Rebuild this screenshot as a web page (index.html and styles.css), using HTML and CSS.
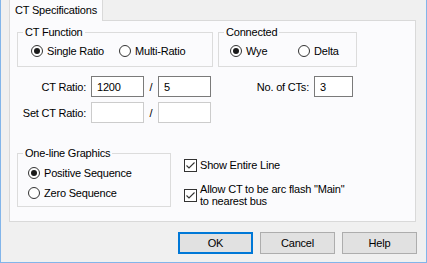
FILE: index.html
```html
<!DOCTYPE html>
<html lang="en">
<head>
    <meta charset="UTF-8">
    <title>CT Specifications</title>
    <link rel="stylesheet" href="styles.css">
</head>
<body>
    <div class="dialog">
        <div class="tab">CT Specifications</div>
        <div class="page">
            <div class="top-row">
                <div class="group group-function">
                    <div class="group-title">CT Function</div>
                    <div class="options options-function">
                        <div class="radio checked w-single"><span class="circle"></span>Single Ratio</div>
                        <div class="radio"><span class="circle"></span>Multi-Ratio</div>
                    </div>
                </div>
                <div class="group group-connected">
                    <div class="group-title">Connected</div>
                    <div class="options options-connected">
                        <div class="radio checked w-wye"><span class="circle"></span>Wye</div>
                        <div class="radio"><span class="circle"></span>Delta</div>
                    </div>
                </div>
            </div>

            <div class="ratio-grid">
                <span class="label">CT Ratio:</span>
                <input type="text" value="1200">
                <span class="slash">/</span>
                <input type="text" value="5">
                <span class="label">No. of CTs:</span>
                <input type="text" value="3">

                <span class="label">Set CT Ratio:</span>
                <input type="text" disabled>
                <span class="slash">/</span>
                <input type="text" disabled>
            </div>

            <div class="bottom-row">
                <div class="group group-graphics">
                    <div class="group-title">One-line Graphics</div>
                    <div class="options options-graphics">
                        <div class="radio checked"><span class="circle"></span>Positive Sequence</div>
                        <div class="radio"><span class="circle"></span>Zero Sequence</div>
                    </div>
                </div>
                <div class="checks">
                    <div class="check">
                        <span class="box"><svg width="11" height="11" viewBox="0 0 11 11"><polyline points="1.5,5.5 4,8 9.5,2.5" fill="none" stroke="#333" stroke-width="1.1"/></svg></span>
                        <span>Show Entire Line</span>
                    </div>
                    <div class="check check-two">
                        <span class="box"><svg width="11" height="11" viewBox="0 0 11 11"><polyline points="1.5,5.5 4,8 9.5,2.5" fill="none" stroke="#333" stroke-width="1.1"/></svg></span>
                        <span>Allow CT to be arc flash "Main"<br>to nearest bus</span>
                    </div>
                </div>
            </div>
        </div>

        <div class="buttons">
            <button class="default">OK</button>
            <button>Cancel</button>
            <button>Help</button>
        </div>
    </div>
</body>
</html>
```
FILE: styles.css
```css
* {
    margin: 0;
    padding: 0;
    box-sizing: border-box;
}

body {
    width: 427px;
    height: 263px;
    background: #f0f0f0;
    font-family: "Liberation Sans", Arial, sans-serif;
    font-size: 11px;
    letter-spacing: -0.2px;
    color: #000;
}

.dialog {
    width: 427px;
    height: 263px;
    border-left: 1px solid #82b5ea;
    border-right: 1px solid #82b5ea;
    border-bottom: 1px solid #82b5ea;
    padding-left: 8px;
}

.tab {
    position: relative;
    z-index: 1;
    width: 94px;
    height: 21px;
    margin-bottom: -1px;
    padding-left: 5px;
    line-height: 20px;
    background: #fbfbfd;
    border-left: 1px solid #d9d9d9;
    border-right: 1px solid #d9d9d9;
}

.page {
    width: 407px;
    height: 202px;
    background: #fbfbfd;
    border: 1px solid #d9d9d9;
}

/* group boxes */
.group {
    border: 1px solid #dcdcdc;
}

.group-title {
    width: fit-content;
    margin: -7px 0 0 5px;
    padding: 0 2px;
    line-height: 13px;
    background: #fbfbfd;
}

.top-row {
    display: flex;
    gap: 5px;
    margin: 11px 0 0 7px;
}

.group-function {
    width: 196px;
    height: 35px;
}

.group-connected {
    width: 139px;
    height: 35px;
}

.options {
    display: flex;
    margin-top: 5px;
}

.options-function {
    padding-left: 13px;
}

.options-connected {
    padding-left: 11px;
}

.radio {
    display: flex;
    align-items: center;
    gap: 4px;
    height: 13px;
    white-space: nowrap;
}

.w-single {
    width: 88px;
}

.w-wye {
    width: 68px;
}

.circle {
    display: flex;
    align-items: center;
    justify-content: center;
    width: 12px;
    height: 12px;
    border: 1px solid #333;
    border-radius: 50%;
    background: #fff;
}

.radio.checked .circle::after {
    content: "";
    width: 6px;
    height: 6px;
    border-radius: 50%;
    background: #1a1a1a;
}

/* ratio fields */
.ratio-grid {
    display: grid;
    grid-template-columns: 81px 53px 14px 53px 103px 39px;
    grid-auto-rows: 21px;
    row-gap: 5px;
    margin-top: 9px;
    align-items: center;
}

.label {
    text-align: right;
    padding-right: 5px;
    white-space: nowrap;
}

.slash {
    text-align: center;
}

input {
    width: 100%;
    height: 21px;
    padding: 0 5px;
    border: 1px solid #7a7a7a;
    background: #fff;
    font: inherit;
    letter-spacing: inherit;
    color: #000;
    outline: none;
}

input:disabled {
    border-color: #cccccc;
    background: #fff;
}

/* bottom part */
.bottom-row {
    display: flex;
    margin: 30px 0 0 7px;
}

.group-graphics {
    width: 154px;
    height: 54px;
}

.options-graphics {
    flex-direction: column;
    gap: 7px;
    margin-top: 6px;
    padding-left: 10px;
}

.checks {
    margin: 6px 0 0 13px;
}

.check {
    display: flex;
    align-items: center;
    gap: 3px;
    line-height: 13px;
}

.check-two {
    margin-top: 11px;
    line-height: 12px;
}

.box {
    display: flex;
    align-items: center;
    justify-content: center;
    flex: none;
    width: 13px;
    height: 13px;
    border: 1px solid #333;
    background: #fff;
}

/* dialog buttons */
.buttons {
    display: flex;
    justify-content: flex-end;
    gap: 7px;
    margin-top: 10px;
    padding-right: 9px;
}

button {
    width: 75px;
    height: 22px;
    border: 1px solid #adadad;
    background: #e1e1e1;
    font: inherit;
    letter-spacing: inherit;
    color: #000;
}

button.default {
    border: 2px solid #0078d7;
}
```
